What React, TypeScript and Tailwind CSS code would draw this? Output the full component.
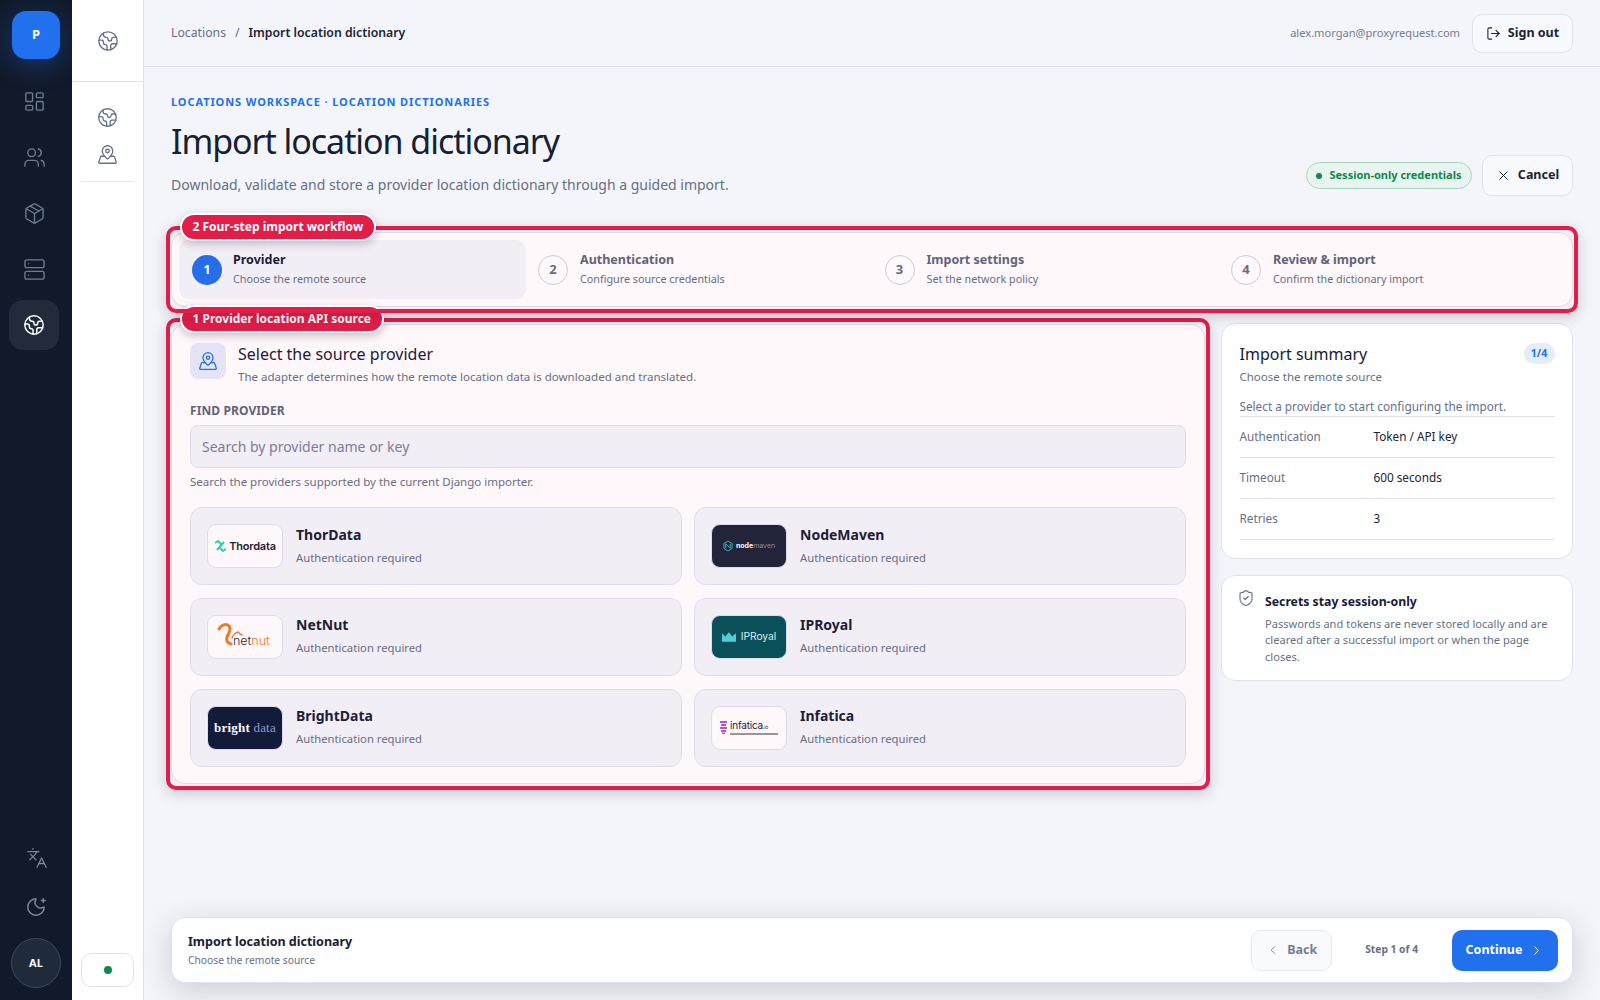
import { ChevronLeft, ChevronRight, Earth, Languages, LayoutDashboard, LogOut, MapPinned, MoonStar, Package, Server, ShieldCheck, Users, X } from "lucide-react";
import type { ReactNode } from "react";

const steps = [
  ["Provider", "Choose the remote source"],
  ["Authentication", "Configure source credentials"],
  ["Import settings", "Set the network policy"],
  ["Review & import", "Confirm the dictionary import"],
];

function Frame({ label, z }: { label: string; z: string }) {
  return (
    <div className={`pointer-events-none absolute -inset-x-[6px] -inset-y-[7px] rounded-[10px] border-4 border-[#e11d48] bg-[#e11d72]/[0.03] shadow-[0_4px_14px_rgba(60,20,50,0.2)] ${z}`}>
      <span className="absolute -top-[17px] left-[10px] flex h-[28px] items-center rounded-[14px] border-2 border-white bg-[#e11d48] px-[10.5px] text-[12px] font-bold whitespace-nowrap text-white shadow-[0_3px_8px_rgba(60,20,50,0.25)]">{label}</span>
    </div>
  );
}

function ThorLogo() {
  return (
    <span className="flex items-center gap-[2px]">
      <svg width="13" height="12" viewBox="0 0 13 12" fill="none" stroke="#2dd4a7" strokeWidth="2">
        <path d="M1 3l3-2 3 3M6 8l3 3 3-2M3 10l7-8" />
      </svg>
      <span className="font-['Inter'] text-[11px] font-semibold tracking-[-0.2px] text-[#1c2230]">Thordata</span>
    </span>
  );
}

function NetNutLogo() {
  return (
    <span className="relative h-[44px] w-[76px]">
      <svg className="absolute top-0 left-0" width="76" height="44" viewBox="0 0 76 44" fill="none" stroke="#f47b20" strokeLinecap="round">
        <path d="M11 14c2-4 7-6 10-3 3 4-1 8-2 11-1 3 0 6 4 7" strokeWidth="3" />
        <path d="M24 23c1-3 4-6 6-6l2 2 2 1" strokeWidth="1.4" />
      </svg>
      <span className="absolute top-[19px] left-[25px] font-['Inter'] text-[12.5px] leading-[14px] font-light">
        <span className="text-[#1f2937]">net</span>
        <span className="text-[#f47b20]">nut</span>
      </span>
    </span>
  );
}

function BrightLogo() {
  return (
    <span className="font-['Liberation_Serif'] text-[13px] tracking-[0.2px] text-white">
      <b>bright</b> <span className="text-[#8f9fd0]">data</span>
    </span>
  );
}

function NodeLogo() {
  return (
    <span className="flex items-center gap-[3px]">
      <svg width="10" height="12" viewBox="0 0 11 13" fill="none" stroke="#3fb8c8" strokeWidth="1">
        <path d="M5.5 1l4.5 2.7v5.6L5.5 12 1 9.3V3.7z" />
        <path d="M3 4l5 5M3 9V4M8 9V4" />
      </svg>
      <span className="font-['Inter'] text-[7px] text-[#8a93a5]">
        <b className="text-white">node</b>maven
      </span>
    </span>
  );
}

function RoyalLogo() {
  return (
    <span className="flex items-center gap-[5px]">
      <svg width="14" height="10" viewBox="0 0 13 9" fill="#4dd4d8">
        <path d="M0 1l3 3 3.5-4 3 4L13 1v8H0z" />
      </svg>
      <span className="font-['Inter'] text-[10.25px] text-[#d8f4f4]">IPRoyal</span>
    </span>
  );
}

function InfaticaLogo() {
  return (
    <span className="flex items-center gap-[3px]">
      <svg width="7" height="13" viewBox="0 0 7 13" fill="#b455d8">
        <path d="M0 0h7v2H0zM1 3h5v2H1zM0 6h7v2H0zM1 9h5v2H1zM2 11.5h3V13H2z" />
      </svg>
      <span className="flex flex-col items-start leading-none">
        <span className="font-['Inter'] text-[10px] leading-[9px] tracking-[-0.2px] text-[#1c2230]">infatica<span className="text-[5px]">.io</span></span>
        <span className="mt-[1px] h-[2px] w-[48px] bg-[#999]" />
      </span>
    </span>
  );
}

const providers: [string, string, ReactNode][] = [
  ["ThorData", "bg-white", <ThorLogo />],
  ["NodeMaven", "bg-[#1c2637]", <NodeLogo />],
  ["NetNut", "bg-white", <NetNutLogo />],
  ["IPRoyal", "bg-[#045259]", <RoyalLogo />],
  ["BrightData", "bg-[#0c1b38]", <BrightLogo />],
  ["Infatica", "bg-white", <InfaticaLogo />],
];

const navIcons = [LayoutDashboard, Users, Package, Server];

export default function App() {
  return (
    <div className="flex h-[1000px] w-[1600px] overflow-hidden bg-[#f3f5fa] font-['Noto_Sans',sans-serif] text-[#172033]">
      <aside className="flex h-full w-[72px] shrink-0 flex-col items-center bg-[#111a2b] pt-[11px] pb-[12px]">
        <div className="flex h-[48px] w-[48px] items-center justify-center rounded-[14px] bg-[#2170ee] text-[13px] font-bold text-white shadow-[0_6px_26px_rgba(33,112,238,0.35)]">P</div>
        <div className="mt-[14px] mr-[4px] flex flex-col items-center">
          {navIcons.map((I, i) => (
            <div key={i} className="flex h-[56px] w-[50px] items-center justify-center text-[#6f7d93]">
              <I size={23} strokeWidth={1.4} />
            </div>
          ))}
          <div className="mt-[3px] flex h-[50px] w-[50px] items-center justify-center rounded-[14px] bg-[#222b3b] text-white">
            <Earth size={22} strokeWidth={1.6} />
          </div>
        </div>
        <div className="mt-auto flex flex-col items-center">
          <Languages size={22} strokeWidth={1.4} className="mb-[27px] translate-x-[1px] text-[#7c8799]" />
          <MoonStar size={22} strokeWidth={1.6} className="mb-[20px] text-[#7c8799]" />
          <div className="flex h-[50px] w-[50px] items-center justify-center rounded-full border border-[#3f4a5d] bg-[#1f2a3d] text-[11px] font-bold text-white">AL</div>
        </div>
      </aside>

      <aside className="flex h-full w-[72px] shrink-0 flex-col items-center border-r border-[#dfe2ee] bg-white">
        <div className="flex h-[82px] w-full items-center justify-center border-b border-[#dfe2ee] text-[#65718a]">
          <Earth size={22} strokeWidth={1.5} />
        </div>
        <div className="flex h-[100px] w-[53px] flex-col items-center border-b border-[#e4e6ef] pt-[25px] text-[#65718a]">
          <Earth size={21} strokeWidth={1.5} />
          <MapPinned size={21} strokeWidth={1.5} className="mt-[16px]" />
        </div>
        <div className="mt-auto mb-[13px] flex h-[34px] w-[53px] items-center justify-center rounded-[10px] border border-[#dfe2ee]">
          <span className="h-[8px] w-[8px] rounded-full bg-[#0b8a4c]" />
        </div>
      </aside>

      <main className="flex h-full min-w-0 flex-1 flex-col">
        <header className="flex h-[67px] shrink-0 items-center justify-between border-b border-[#dfe3ef] pr-[27px] pl-[27px]">
          <nav className="flex items-center text-[12.25px]">
            <span className="text-[#667085]">Locations</span>
            <span className="mx-[9px] text-[#667085]">/</span>
            <span className="font-semibold text-[#1b2436]">Import location dictionary</span>
          </nav>
          <div className="flex items-center gap-[12px]">
            <span className="text-[11.1px] text-[#737d92]">alex.morgan@proxyrequest.com</span>
            <button className="flex h-[39px] w-[101px] items-center justify-center gap-[7px] rounded-[10px] border border-[#dfe2ee] bg-[#f8f9fd] text-[12.5px] font-bold text-[#1b2436]">
              <LogOut size={15} strokeWidth={1.7} />
              Sign out
            </button>
          </div>
        </header>

        <div className="flex min-h-0 flex-1 flex-col pr-[27px] pl-[27px]">
          <div className="flex items-end justify-between pt-[27px]">
            <div>
              <p className="text-[11px] leading-[16px] font-bold tracking-[0.91px] text-[#2170ee] uppercase">Locations workspace · Location dictionaries</p>
              <h1 className="mt-[7px] text-[34px] leading-[48px] font-normal tracking-[-1.05px] text-[#172033]">Import location dictionary</h1>
              <p className="mt-[9px] text-[14px] leading-[22px] text-[#667085]">Download, validate and store a provider location dictionary through a guided import.</p>
            </div>
            <div className="flex items-center gap-[10px]">
              <span className="flex h-[27px] items-center gap-[7px] rounded-full border border-[#a9d3c0] bg-[#e8f4ef] px-[9.5px] text-[11px] font-bold text-[#0b8a4c]">
                <span className="h-[6px] w-[6px] rounded-full bg-[#0b8a4c]" />
                Session-only credentials
              </span>
              <button className="flex h-[41px] w-[91px] items-center justify-center gap-[7px] rounded-[10px] border border-[#dfe2ee] bg-[#f8f9fd] text-[12.5px] font-bold text-[#1b2436]">
                <X size={15} strokeWidth={1.6} />
                Cancel
              </button>
            </div>
          </div>

          <section className="relative mt-[36px] grid h-[75px] shrink-0 grid-cols-4 rounded-[14px] border border-[#dfe2ee] bg-white p-[7px]">
            {steps.map(([t, d], i) => (
              <div key={t} className={`flex items-center rounded-[10px] ${i === 0 ? "gap-[11px] bg-[#f3f5fa] pl-[13px]" : "gap-[12px] pl-[12.5px]"}`}>
                <span className={`flex h-[30px] w-[30px] shrink-0 items-center justify-center rounded-full text-[13px] font-bold ${i === 0 ? "bg-[#2170ee] text-white" : "border border-[#ccd1de] text-[#667085]"}`}>{i + 1}</span>
                <span className="-mt-[1px] flex flex-col">
                  <span className={`text-[12.5px] leading-[18px] font-bold ${i === 0 ? "text-[#172033]" : "text-[#5d6679]"}`}>{t}</span>
                  <span className="mt-[2px] text-[10.75px] leading-[16px] text-[#667085]">{d}</span>
                </span>
              </div>
            ))}
            <Frame label="2 Four-step import workflow" z="z-20" />
          </section>

          <div className="mt-[17px] flex items-start gap-[16px]">
            <section className="relative h-[460px] w-[1034px] shrink-0 rounded-[14px] border border-[#dfe2ee] bg-white px-[18px] pt-[18px]">
              <Frame label="1 Provider location API source" z="z-10" />
              <div className="flex gap-[12px]">
                <span className="flex h-[36px] w-[36px] items-center justify-center rounded-[8px] bg-[#e6ebfa] text-[#2170ee]">
                  <MapPinned size={20} strokeWidth={1.5} />
                </span>
                <div>
                  <h2 className="text-[16px] leading-[22px] font-normal text-[#172033]">Select the source provider</h2>
                  <p className="mt-[3px] text-[11.5px] leading-[17px] text-[#667085]">The adapter determines how the remote location data is downloaded and translated.</p>
                </div>
              </div>
              <label className="mt-[17px] block text-[12px] leading-[18px] font-bold tracking-[0.1px] text-[#5d6679] uppercase">Find provider</label>
              <div className="mt-[5px] flex h-[43px] items-center rounded-[8px] border border-[#dfe2ee] bg-[#f3f5fa] px-[11px] text-[14px] text-[#7a8294]">Search by provider name or key</div>
              <p className="mt-[6px] text-[11.5px] leading-[16px] text-[#667085]">Search the providers supported by the current Django importer.</p>
              <div className="mt-[17px] grid grid-cols-2 gap-x-[12px] gap-y-[12.8px]">
                {providers.map(([n, bg, logo]) => (
                  <div key={n} className="flex h-[78px] items-center gap-[13px] rounded-[12px] border border-[#dfe2ee] bg-[#f3f5fa] pl-[16px]">
                    <span className={`flex h-[44px] w-[76px] shrink-0 items-center justify-center rounded-[9px] border border-[#dfe2ee] ${bg}`}>{logo}</span>
                    <span className="flex flex-col pb-[2px]">
                      <span className="text-[14px] leading-[20px] font-bold text-[#172033]">{n}</span>
                      <span className="mt-[5px] text-[11.25px] leading-[16px] text-[#667085]">Authentication required</span>
                    </span>
                  </div>
                ))}
              </div>
            </section>

            <div className="-mt-[1px] flex min-w-0 flex-1 flex-col gap-[16px]">
              <section className="h-[236px] rounded-[14px] border border-[#dfe2ee] bg-white px-[17.5px] pt-[19px]">
                <div className="flex items-start justify-between">
                  <div>
                    <h2 className="text-[16px] leading-[22px] font-normal text-[#172033]">Import summary</h2>
                    <p className="mt-[3px] text-[11.5px] leading-[17px] text-[#667085]">Choose the remote source</p>
                  </div>
                  <span className="flex h-[21px] w-[31px] items-center justify-center rounded-full bg-[#e4edfc] text-[10.5px] font-bold text-[#2170ee]">1/4</span>
                </div>
                <p className="mt-[12px] border-b border-[#dfe2ee] pb-[1px] text-[11.75px] leading-[18px] text-[#667085]">Select a provider to start configuring the import.</p>
                {[["Authentication", "Token / API key"], ["Timeout", "600 seconds"], ["Retries", "3"]].map(([k, v]) => (
                  <div key={k} className="flex h-[41px] items-start border-b border-[#dfe2ee] pt-[10px] text-[11.75px] leading-[18px]">
                    <span className="w-[134px] text-[#667085]">{k}</span>
                    <span className="text-[#1b2436]">{v}</span>
                  </div>
                ))}
              </section>
              <section className="flex h-[106px] gap-[10px] rounded-[14px] border border-[#dfe2ee] bg-white pt-[13px] pl-[15px]">
                <ShieldCheck size={18} strokeWidth={1.5} className="shrink-0 text-[#65718a]" />
                <div className="pt-[4px]">
                  <h3 className="text-[12.25px] leading-[18px] font-bold text-[#172033]">Secrets stay session-only</h3>
                  <p className="mt-[4.5px] w-[292px] text-[11.1px] leading-[16.5px] text-[#667085]">Passwords and tokens are never stored locally and are cleared after a successful import or when the page closes.</p>
                </div>
              </section>
            </div>
          </div>

          <footer className="mt-auto mb-[17px] flex h-[66px] shrink-0 items-center justify-between rounded-[14px] border border-[#dfe2ee] bg-white pr-[14px] pl-[16px] shadow-[0_8px_30px_rgba(23,32,51,0.18)]">
            <div>
              <p className="mt-[1px] text-[12.5px] leading-[18px] font-bold text-[#172033]">Import location dictionary</p>
              <p className="mt-[2px] text-[10.25px] leading-[15px] text-[#667085]">Choose the remote source</p>
            </div>
            <div className="flex items-center">
              <button className="flex h-[41px] w-[81px] items-center justify-center gap-[7px] rounded-[10px] border border-[#e7e9f1] bg-[#f9fafc] text-[12.5px] font-bold text-[#757e91]">
                <ChevronLeft size={14} strokeWidth={1.6} />
                Back
              </button>
              <span className="mr-[34px] ml-[33px] text-[10.25px] font-bold text-[#667085]">Step 1 of 4</span>
              <button className="flex h-[41px] w-[106px] items-center justify-center gap-[7px] rounded-[10px] bg-[#2170ee] text-[12.5px] font-bold text-white">
                Continue
                <ChevronRight size={15} strokeWidth={1.6} />
              </button>
            </div>
          </footer>
        </div>
      </main>
    </div>
  );
}
